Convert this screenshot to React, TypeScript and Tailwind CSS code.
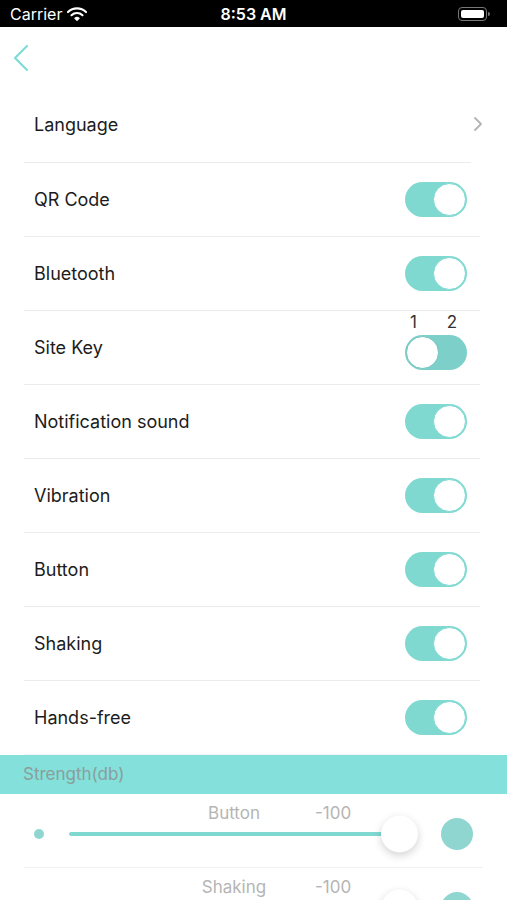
import { useState } from 'react';

const ROWS = ['QR Code', 'Bluetooth', 'Site Key', 'Notification sound', 'Vibration', 'Button', 'Shaking', 'Hands-free'];

function Toggle({ on, dark }: { on: boolean; dark?: boolean }) {
  return (
    <div
      className={`flex h-[35px] w-[62px] items-center rounded-full p-px ${on ? 'justify-end' : 'justify-start'} ${dark ? 'bg-[#7dcfc9]' : 'bg-[#7fd9d1]'}`}
    >
      <div className={`h-[33px] w-[33px] rounded-full border bg-white ${dark ? 'border-[#6fc4be]' : 'border-[#7fd9d1]'}`} />
    </div>
  );
}

function StatusBar() {
  return (
    <div className="relative flex h-[27px] items-center bg-black px-[10px] text-white">
      <span className="text-[16px] leading-none">Carrier</span>
      <svg className="ml-[5px]" width="20" height="14" viewBox="0 0 20 14">
        <path d="M1 5 A13 13 0 0 1 19 5" stroke="white" strokeWidth="2.2" fill="none" strokeLinecap="round" />
        <path d="M4.5 8.2 A8 8 0 0 1 15.5 8.2" stroke="white" strokeWidth="2.2" fill="none" strokeLinecap="round" />
        <path d="M8 11.3 A3.2 3.2 0 0 1 12 11.3 L10 13.3 Z" fill="white" stroke="white" strokeWidth="1.4" strokeLinejoin="round" />
      </svg>
      <span className="absolute left-1/2 -translate-x-1/2 text-[16px] font-semibold leading-none">8:53 AM</span>
      <div className="ml-auto mr-[7px] flex items-center">
        <div className="h-[14px] w-[29px] rounded-[4px] border border-[#777] p-[2px]">
          <div className="h-full w-full rounded-[2px] bg-white" />
        </div>
        <div className="ml-px h-[4px] w-[2px] rounded-r bg-[#777]" />
      </div>
    </div>
  );
}

function SliderRow({ label, value, last }: { label: string; value: string; last?: boolean }) {
  return (
    <div className={`mx-[24px] flex h-[74px] flex-col ${last ? '' : 'border-b border-[#f0f2f2]'}`}>
      <div className="mt-[8px] flex h-[24px] items-center pl-[170px] text-[17px] text-[#b5b5b5]">
        <span className="w-[80px] text-center">{label}</span>
        <span className="ml-[41px]">{value}</span>
      </div>
      <div className="flex h-[16px] items-center">
        <div className="ml-[10px] h-[10px] w-[10px] rounded-full bg-[#8fd6d1]" />
        <div className="relative ml-[25px] flex h-[4px] w-[334px] items-center">
          <div className="h-[4px] w-[316px] rounded-full bg-[#7fd9d1]" />
          <div className="absolute right-[-15px] top-1/2 h-[37px] w-[37px] -translate-y-1/2 rounded-full bg-white shadow-[0_3px_8px_rgba(0,0,0,0.18)]" />
        </div>
        <div className="ml-[38px] h-[32px] w-[32px] shrink-0 rounded-full bg-[#8fd6d1]" />
      </div>
    </div>
  );
}

export default function App() {
  const [toggles] = useState<Record<string, boolean>>({
    'QR Code': true,
    Bluetooth: true,
    'Site Key': false,
    'Notification sound': true,
    Vibration: true,
    Button: true,
    Shaking: true,
    'Hands-free': true,
  });

  return (
    <div className="h-[900px] w-[507px] overflow-hidden bg-white font-['Inter','Liberation_Sans',sans-serif] text-[#1c1c1c]">
      <StatusBar />

      {/* Nav */}
      <div className="flex h-[61px] items-center pl-[12px]">
        <svg width="18" height="28" viewBox="0 0 18 28">
          <path d="M15 2 L3 14 L15 26" stroke="#7fdcd6" strokeWidth="2.2" fill="none" strokeLinecap="round" strokeLinejoin="round" />
        </svg>
      </div>

      {/* Language */}
      <div className="ml-[24px] mr-[36px] flex h-[75px] items-center border-b border-[#ececec] pb-[2px] pl-[10px]">
        <span className="text-[18px]">Language</span>
        <svg className="ml-auto mr-[-13px]" width="12" height="16" viewBox="0 0 12 16">
          <path d="M3 2 L9 8 L3 14" stroke="#b3b3b3" strokeWidth="1.8" fill="none" strokeLinecap="round" strokeLinejoin="round" />
        </svg>
      </div>

      {ROWS.map((r, i) => (
        <div
          key={r}
          className={`mx-[24px] mr-[27px] flex h-[74px] items-center pl-[10px] pr-[13px] ${i === ROWS.length - 1 ? 'border-b border-[#f2f2f2]' : 'border-b border-[#ececec]'}`}
        >
          <span className="text-[18px]">{r}</span>
          <div className="ml-auto">
            {r === 'Site Key' ? (
              <div className="flex flex-col pb-[12px]">
                <div className="mb-[4px] ml-[5px] flex h-[18px] w-[47px] justify-between text-[17px] leading-[18px] text-[#333]">
                  <span>1</span>
                  <span>2</span>
                </div>
                <Toggle on={false} dark />
              </div>
            ) : (
              <Toggle on={toggles[r]} />
            )}
          </div>
        </div>
      ))}

      {/* Strength header */}
      <div className="flex h-[39px] items-center bg-[#84e0da] pl-[23px] text-[17px] text-[#8a9e9c]">
        Strength(db)
      </div>

      <SliderRow label="Button" value="-100" />
      <SliderRow label="Shaking" value="-100" last />
    </div>
  );
}
